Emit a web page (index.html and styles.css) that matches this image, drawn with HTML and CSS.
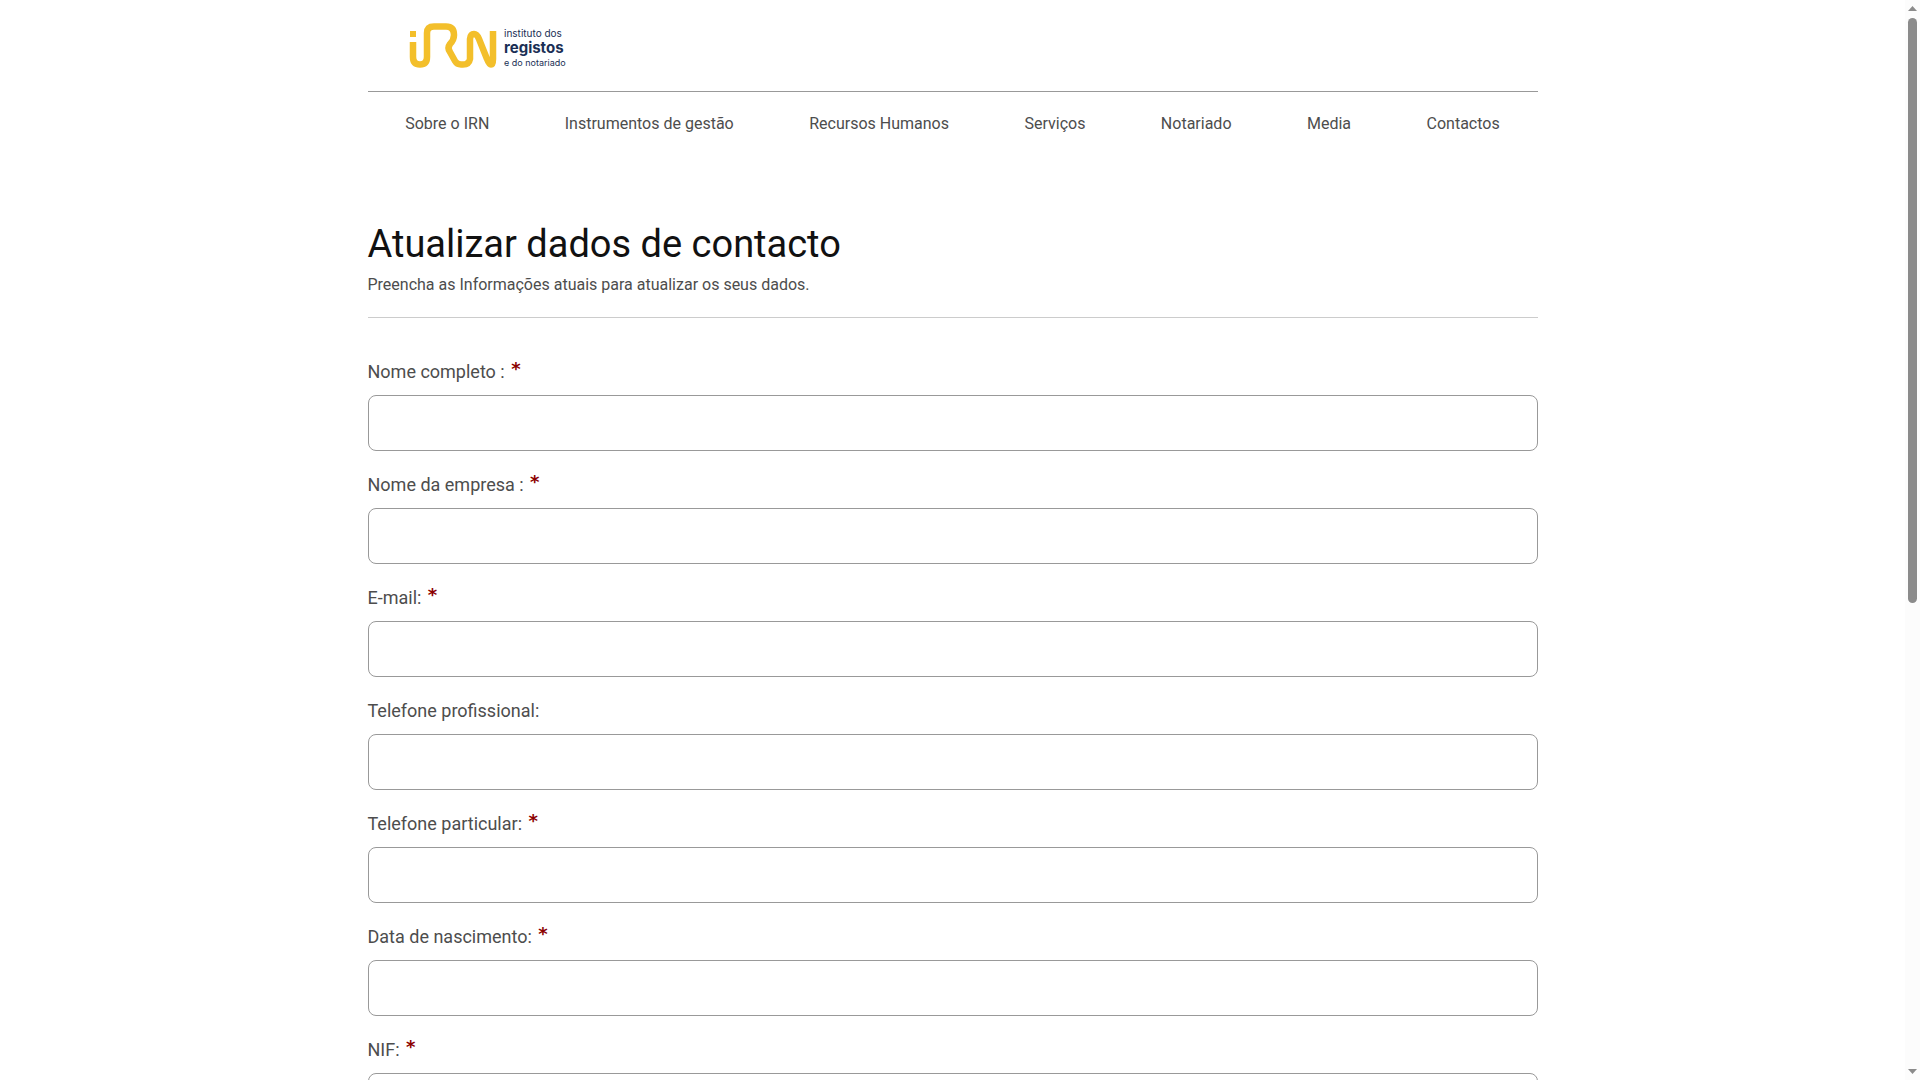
FILE: index.html
```html
<!DOCTYPE html>
<html lang="pt">
<head>
  <meta charset="UTF-8" />
  <meta name="viewport" content="width=device-width, initial-scale=1.0"/>
  <title>Atualizar dados de contacto - IRN</title>
  <link rel="stylesheet" href="styles.css">
</head>
<body>

  <div class="page">
    <header class="header">
      <a class="logo" href="#" aria-label="IRN">
        <svg width="160" height="48" viewBox="0 0 160 48">
          <g fill="none" stroke="#f3bf2b" stroke-width="6.500" stroke-linejoin="round">
            <path d="M4 20V35Q4 42.500 11 42.500Q18 42.500 18 35V11Q18 4.500 25 4.500H37Q45 4.500 45 13Q45 18 41 22Q38 26 41 30L46 39Q48 42.500 52 42.500H54Q60 42.500 61 37V17Q61.500 12 65 12Q68 12 70 17L78 37Q80 42.500 82 42.500Q84 42.500 84 37V9"/>
          </g>
          <rect x="1" y="9" width="6" height="6" fill="#f3bf2b"/>
          <g class="logo-text">
            <text x="95" y="15" font-size="10">instituto dos</text>
            <text x="95" y="31" font-size="15" font-weight="bold">registos</text>
            <text x="95" y="44" font-size="9">e do notariado</text>
          </g>
        </svg>
      </a>
    </header>

    <nav class="menu">
      <a href="#">Sobre o IRN</a>
      <a href="#">Instrumentos de gestão</a>
      <a href="#">Recursos Humanos</a>
      <a href="#">Serviços</a>
      <a href="#">Notariado</a>
      <a href="#">Media</a>
      <a href="#">Contactos</a>
    </nav>

    <main>
      <div class="intro">
        <h1>Atualizar dados de contacto</h1>
        <p>Preencha as Informações atuais para atualizar os seus dados.</p>
      </div>

      <form class="form">
        <div class="field">
          <label for="nome">Nome completo : <span class="required">*</span></label>
          <input type="text" id="nome" required>
        </div>
        <div class="field">
          <label for="empresa">Nome da empresa : <span class="required">*</span></label>
          <input type="text" id="empresa" required>
        </div>
        <div class="field">
          <label for="email">E-mail: <span class="required">*</span></label>
          <input type="email" id="email" required>
        </div>
        <div class="field">
          <label for="telprof">Telefone profissional:</label>
          <input type="tel" id="telprof">
        </div>
        <div class="field">
          <label for="telpart">Telefone particular: <span class="required">*</span></label>
          <input type="tel" id="telpart" required>
        </div>
        <div class="field">
          <label for="nascimento">Data de nascimento: <span class="required">*</span></label>
          <input type="text" id="nascimento" required>
        </div>
        <div class="field">
          <label for="nif">NIF: <span class="required">*</span></label>
          <input type="text" id="nif" required>
        </div>
      </form>
    </main>
  </div>

  <div class="scrollbar" aria-hidden="true">
    <svg width="9" height="5" viewBox="0 0 9 5"><path d="M0 5L4.500 0L9 5Z"/></svg>
    <div class="track"><div class="thumb"></div></div>
    <svg width="9" height="5" viewBox="0 0 9 5"><path d="M0 0L4.500 5L9 0Z"/></svg>
  </div>

</body>
</html>
```
FILE: styles.css
```css
* {
  box-sizing: border-box;
  padding: 0;
  margin: 0;
}

body {
  font-family: Roboto, sans-serif;
  font-size: 16px;
  line-height: 24px;
  color: #4d4d4d;
  background: #fff;
  height: 100vh;
  overflow: hidden;
  padding-right: 15px;
}

.page {
  max-width: 1170px;
  margin: 0 auto;
}

.header {
  padding: 22px 41px 21px;
  border-bottom: 1px solid #999;
}

.logo {
  display: block;
}

.logo svg {
  display: block;
}

.logo-text {
  font-family: Inter, sans-serif;
  fill: #1a2f55;
}

.menu {
  display: flex;
  justify-content: space-around;
  padding: 20px 0;
}

.menu a {
  color: #4d4d4d;
  text-decoration: none;
}

.intro {
  margin-top: 64px;
  padding-bottom: 20px;
  border-bottom: 1px solid #ccc;
}

h1 {
  font-size: 38px;
  font-weight: 400;
  line-height: 48px;
  color: #111;
  margin-bottom: 5px;
}

.form {
  padding-top: 40px;
}

.field {
  margin-bottom: 20px;
}

.field label {
  display: block;
  font-size: 18px;
  line-height: 27px;
  margin-bottom: 10px;
}

.required {
  font-family: "DejaVu Sans", sans-serif;
  font-weight: bold;
  line-height: 1;
  vertical-align: 3px;
  color: #8b0000;
  margin-left: 2px;
}

.field input {
  display: block;
  width: 100%;
  height: 56px;
  padding: 0 16px;
  font: inherit;
  border: 1px solid #999;
  border-radius: 8px;
  background: #fff;
}

/* page scrollbar */
.scrollbar {
  position: fixed;
  top: 0;
  right: 0;
  bottom: 0;
  width: 15px;
  padding: 6px 0;
  display: flex;
  flex-direction: column;
  align-items: center;
  gap: 7px;
  background: #fcfcfc;
}

.scrollbar svg {
  fill: #8b8b8b;
}

.track {
  flex: 1;
}

.thumb {
  width: 9px;
  height: 56%;
  border-radius: 5px;
  background: #8b8b8b;
}
```
